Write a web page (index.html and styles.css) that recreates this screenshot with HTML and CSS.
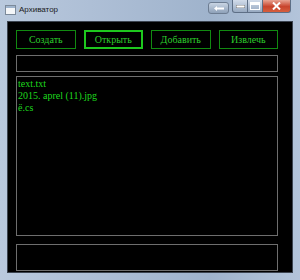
FILE: index.html
```html
<!DOCTYPE html>
<html lang="ru">
<head>
    <meta charset="UTF-8">
    <title>Архиватор</title>
    <link rel="stylesheet" href="styles.css">
</head>
<body>
    <!-- Window frame -->
    <div class="window">
        <div class="titlebar">
            <svg class="app-icon" width="11" height="10" viewBox="0 0 11 10">
                <rect x="0.5" y="0.5" width="10" height="9" fill="#f4f6f8" stroke="#7c8a9a"/>
                <rect x="1" y="1" width="9" height="2" fill="#9fb4cc"/>
            </svg>
            <span class="title">Архиватор</span>
            <div class="caption-extra">
                <svg width="10" height="5" viewBox="0 0 10 5"><path d="M0 2.5 L3 0 V1.5 H10 V3.5 H3 V5 Z" fill="#fff"/></svg>
            </div>
            <div class="caption-buttons">
                <div class="cap-btn">
                    <svg width="9" height="3" viewBox="0 0 9 3"><rect x="0" y="0" width="9" height="3" fill="#fff" stroke="#333" stroke-width="0.6"/></svg>
                </div>
                <div class="cap-btn">
                    <svg width="10" height="8" viewBox="0 0 10 8"><rect x="0.5" y="0.5" width="9" height="7" fill="none" stroke="#fff" stroke-width="1"/><rect x="1" y="1" width="8" height="2" fill="#fff"/></svg>
                </div>
                <div class="cap-btn close">
                    <svg width="9" height="8" viewBox="0 0 9 8"><path d="M1 0.5 L8 7.5 M8 0.5 L1 7.5" stroke="#fff" stroke-width="2"/></svg>
                </div>
            </div>
        </div>

        <!-- Client area -->
        <div class="client">
            <div class="toolbar">
                <button class="btn">Создать</button>
                <button class="btn focused">Открыть</button>
                <button class="btn">Добавить</button>
                <button class="btn">Извлечь</button>
            </div>
            <div class="path-field"></div>
            <div class="file-list">
                <div>text.txt</div>
                <div>2015. aprel (11).jpg</div>
                <div>ё.cs</div>
            </div>
            <div class="status-field"></div>
        </div>
    </div>
</body>
</html>
```

FILE: styles.css
```css
/* General */
body {
    margin: 0;
    padding: 0;
    width: 300px;
    height: 280px;
    overflow: hidden;
    background: #000;
}

/* Window frame (Aero style) */
.window {
    width: 300px;
    height: 280px;
    box-sizing: border-box;
    padding: 0 7px 7px 7px;
    background: linear-gradient(90deg, #b9c9dd 0%, #aebfd6 30%, #9fb3cc 70%, #b3c4da 100%);
    display: flex;
    flex-direction: column;
}

.titlebar {
    height: 21px;
    display: flex;
    align-items: center;
    position: relative;
    margin: 0 -7px;
    padding-left: 5px;
}

.app-icon {
    margin-top: -2px;
}

.title {
    font-family: 'Liberation Sans', sans-serif;
    font-size: 8px;
    color: #1a1a1a;
    margin-left: 3px;
    margin-top: -2px;
}

.caption-extra {
    position: absolute;
    left: 208px;
    top: 2px;
    width: 19px;
    height: 10px;
    border: 1px solid #6d7d92;
    border-radius: 3px;
    background: linear-gradient(#c8d4e3, #8ea1b9);
    display: flex;
    align-items: center;
    justify-content: center;
}

.caption-buttons {
    position: absolute;
    left: 233px;
    top: 0;
    display: flex;
    height: 13px;
}

.cap-btn {
    width: 16px;
    height: 13px;
    box-sizing: border-box;
    border: 1px solid #5e6f86;
    border-top: none;
    margin-left: -1px;
    background: linear-gradient(#d2dcea, #97a9c0);
    display: flex;
    align-items: center;
    justify-content: center;
}

.cap-btn:first-child {
    border-bottom-left-radius: 3px;
}

.cap-btn.close {
    width: 29px;
    border-bottom-right-radius: 3px;
    background: linear-gradient(#e8a493, #c8432c 55%, #d65f3e);
}

/* Client area */
.client {
    flex: 1;
    background: #000;
    border: 1px solid #3c4450;
    box-sizing: border-box;
    padding: 8px 14px 0 8px;
    display: flex;
    flex-direction: column;
}

.toolbar {
    display: grid;
    grid-template-columns: repeat(4, 1fr);
    gap: 8px;
}

.btn {
    height: 19px;
    padding: 0;
    background: #000;
    border: 1px solid #118a11;
    color: #2ccc2c;
    font-family: 'Liberation Serif', serif;
    font-size: 10px;
}

.btn.focused {
    border: 2px solid #1ec81e;
}

.path-field {
    height: 17px;
    margin-top: 6px;
    border: 1px solid #6e6e6e;
    box-sizing: border-box;
}

.file-list {
    height: 160px;
    margin-top: 4px;
    border: 1px solid #6e6e6e;
    box-sizing: border-box;
    padding: 1px 0 0 1px;
    font-family: 'Liberation Serif', serif;
    font-size: 10px;
    line-height: 12px;
    color: #1ed81e;
}

.status-field {
    height: 27px;
    margin-top: 8px;
    border: 1px solid #6e6e6e;
    box-sizing: border-box;
}
```
